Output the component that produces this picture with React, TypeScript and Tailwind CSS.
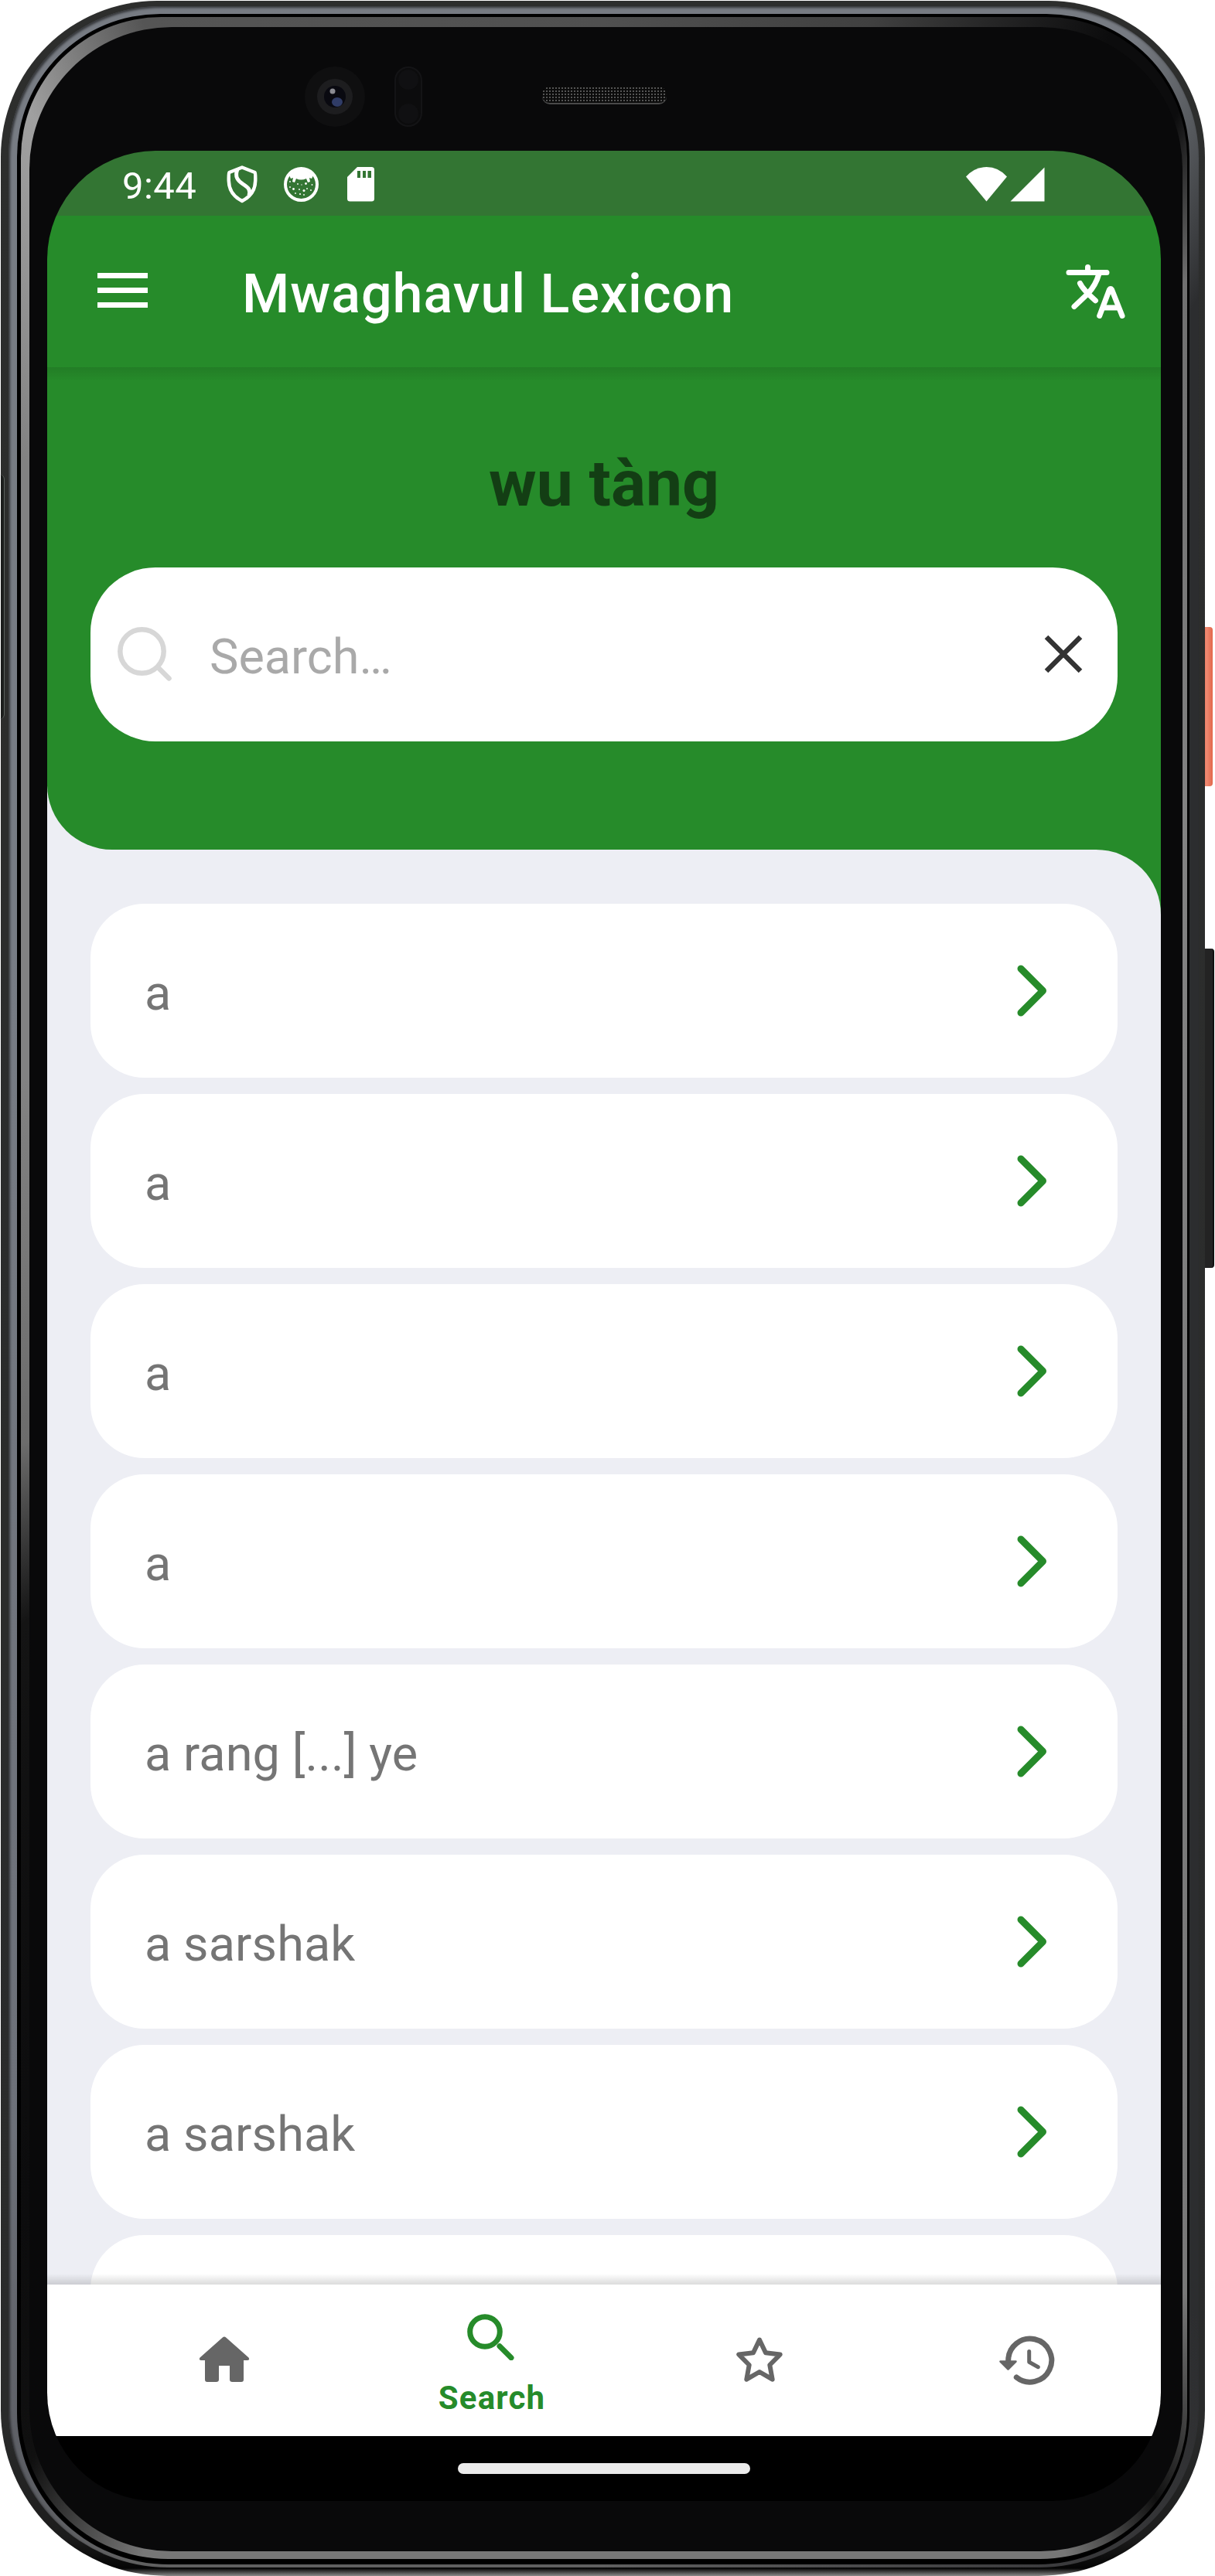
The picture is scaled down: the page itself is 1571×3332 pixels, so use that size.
const words = ['a', 'a', 'a', 'a', 'a rang [...] ye', 'a sarshak', 'a sarshak', ''];

function StatusBar() {
  return (
    <div className="flex h-[84px] shrink-0 items-center bg-[#337533] pl-[97px] pr-[150px] pt-[3px] text-white">
      <span className="w-[135px] pt-[4px] text-[49px] leading-[57px] tracking-[0.4px]">9:44</span>
      <svg className="h-[49px] w-[40px]" viewBox="0 0 40 49" fill="none" stroke="currentColor" strokeWidth="4.5" strokeLinejoin="round">
        <path d="M20 2.500 L36.500 9 Q37.500 10 37.200 20 C37 32 30 41 20 46 C10 41 3 32 2.800 20 Q2.500 10 3.500 9 Z" />
        <path d="M14 5 C10 15 15 20 21 24 C29 29 31 32 29 39" strokeWidth="5" />
      </svg>
      <svg className="ml-[34px] h-[45px] w-[45px]" viewBox="0 0 45 45" fill="none">
        <circle cx="22.500" cy="22.500" r="20.500" stroke="white" strokeWidth="4" />
        <path d="M7 11 Q22 -6 38 11 L36 15 L33 14 L34 19 L31 20 L29 15 Q22 18 16 15 L14 20 L11 19 L12 14 L9 15 Z" fill="white" />
        <g fill="white">
          <circle cx="28.500" cy="21.500" r="1.400" /><circle cx="12.500" cy="28.500" r="1.400" /><circle cx="26" cy="30.500" r="1.500" />
          <circle cx="18" cy="22" r="0.900" /><circle cx="8" cy="26" r="0.900" /><circle cx="36.500" cy="23" r="0.900" />
          <circle cx="20" cy="29" r="0.900" /><circle cx="30" cy="28" r="0.900" /><circle cx="35" cy="30" r="0.900" />
          <circle cx="15" cy="34" r="0.900" /><circle cx="21" cy="35" r="1.100" /><circle cx="26" cy="36" r="0.900" /><circle cx="23" cy="23" r="0.700" />
          <circle cx="8" cy="19" r="0.900" />
        </g>
      </svg>
      <svg className="ml-[37px] h-[45px] w-[35px]" viewBox="0 0 35 45">
        <path d="M13 0 H31.500 Q35 0 35 3.500 V41 Q35 44.500 31.500 44.500 H3.500 Q0 44.500 0 41 V13 Z" fill="white" />
        <path d="M13 5h4v9h-4z M20 5h4v9h-4z M26.500 5h4.500v9h-4.500z" fill="#337533" />
      </svg>
      <svg className="ml-auto h-[45px] w-[53px]" viewBox="0 0 53 45" fill="white">
        <path d="M0 12.500 Q11 0 26.500 0 Q42 0 53 12.500 L26.500 44.500 Z" />
      </svg>
      <svg className="ml-[4px] h-[45px] w-[45px]" viewBox="0 0 45 45" fill="white">
        <path d="M44.500 0.500 V44.500 H0.500 Z" />
      </svg>
    </div>
  );
}

function Toolbar() {
  return (
    <div className="flex h-[196px] shrink-0 items-center bg-[#268b2a] pl-[65px] pr-[46px] text-white">
      <div className="mb-[3px] flex w-[65px] flex-col gap-[12px]">
        <span className="h-[7px] bg-white" />
        <span className="h-[7px] bg-white" />
        <span className="h-[7px] bg-white" />
      </div>
      <h1 className="ml-[122px] pt-[6px] text-[70px] leading-[82px] font-medium tracking-[1px] whitespace-nowrap">Mwaghavul Lexicon</h1>
      <svg className="ml-auto h-[70px] w-[77px]" viewBox="0 0 77 70" fill="none" stroke="white" strokeWidth="7" strokeLinecap="round" strokeLinejoin="round">
        <path d="M4 10.500 H53 M28.500 3.500 V9 M43 12 C40 23 35.500 30.500 28.500 38 L11 54.500 M18.500 24.500 C21 30 25 35 38.500 46.800" />
        <path d="M43.700 66.500 L56.500 32.500 Q58 30.500 59.500 32.500 L73 66.500" />
        <path d="M49 56 H67" strokeLinecap="butt" />
      </svg>
    </div>
  );
}

function Header() {
  return (
    <div className="shrink-0 bg-[#edeef4]">
      <div className="relative flex h-[624px] flex-col items-center rounded-bl-[84px] bg-[#268b2a] px-[56px]">
        <div className="absolute inset-x-0 top-0 h-[18px] bg-gradient-to-b from-black/10 to-transparent" />
        <h2 className="mt-[102px] text-[84px] leading-[98px] font-bold text-[#133e14]">wu tàng</h2>
        <div className="mt-[59px] flex h-[225px] w-full items-center rounded-[84px] bg-white pl-[34px] pr-[45px]">
          <svg className="mb-[2px] h-[72px] w-[72px]" viewBox="0 0 72 72" fill="none" stroke="#d7d7d7" strokeWidth="6.500" strokeLinecap="round">
            <circle cx="32.500" cy="32.500" r="28.200" />
            <path d="M54 54 L67.500 67.500" />
          </svg>
          <span className="ml-[48px] pt-[6px] text-[63px] leading-[74px] text-[#a9a9a9]">Search…</span>
          <svg className="mb-[2px] ml-auto h-[50px] w-[50px]" viewBox="0 0 50 50" stroke="#333333" strokeWidth="6.500">
            <path d="M3 3 L47 47 M47 3 L3 47" />
          </svg>
        </div>
      </div>
    </div>
  );
}

function WordList() {
  return (
    <div className="min-h-0 flex-1 bg-[#268b2a]">
      <div className="relative flex h-full flex-col gap-[21px] overflow-hidden rounded-tr-[84px] bg-[#edeef4] px-[56px] pt-[70px]">
        {words.map((word, i) => (
          <div key={i} className="flex h-[225px] shrink-0 items-center rounded-[70px] bg-white pl-[70px] pr-[91px]">
            <span className="pt-[6px] text-[63px] leading-[74px] tracking-[0.1px] text-[#757575]">{word}</span>
            <svg className="ml-auto h-[67px] w-[39px]" viewBox="0 0 39 67" fill="none" stroke="#268b2a" strokeWidth="9" strokeLinecap="round" strokeLinejoin="round">
              <path d="M5 5 L33.500 33.500 L5 62" />
            </svg>
          </div>
        ))}
        <div className="absolute inset-x-0 bottom-0 h-[14px] bg-gradient-to-t from-black/14 to-transparent" />
      </div>
    </div>
  );
}

function BottomNav() {
  return (
    <div className="grid h-[196px] shrink-0 grid-cols-4 items-center bg-white pl-[56px]">
      <svg className="mx-auto mb-[2px] h-[60px] w-[66px]" viewBox="0 0 66 60" fill="#666666">
        <path d="M30.800 1.500 Q33 -0.500 35.200 1.500 L64.500 27.500 Q66.500 31 63 31 H58 V56 Q58 59 55 59 H43.500 Q40 59 40 56 V38 H26 V56 Q26 59 22.500 59 H11 Q8 59 8 56 V31 H3 Q-0.500 31 1.500 27.500 Z" />
      </svg>
      <div className="flex flex-col items-center pt-[13px] text-[#268b2a]">
        <svg className="h-[60px] w-[64px]" viewBox="0 0 64 60" fill="none" stroke="currentColor" strokeWidth="7">
          <circle cx="23" cy="23" r="19.300" />
          <path d="M42 41.700 L57 56.700" strokeLinecap="round" />
        </svg>
        <span className="mt-[24px] text-[42px] leading-[49px] font-bold tracking-[1.2px]">Search</span>
      </div>
      <svg className="mx-auto mb-[2px] h-[59px] w-[60px]" viewBox="0 0 60 59" fill="none" stroke="#666666" strokeWidth="6" strokeLinejoin="round">
        <path d="M30 3.500 L38 20.300 L56.700 22.500 L43.300 36 L46.700 54.700 L30 45 L13.300 54.700 L16.700 36 L3.300 22.500 L22 20.300 Z" />
      </svg>
      <svg className="mx-auto h-[64px] w-[74px]" viewBox="0 0 74 64" fill="none" stroke="#666666" strokeLinecap="round" strokeLinejoin="round">
        <path d="M12.700 34 V32 A28 28 0 1 1 23.300 54" strokeWidth="7" />
        <path d="M39.700 20.500 V34.300 L51.300 40.700" strokeWidth="5" />
        <path d="M2.500 33.500 H22.500 L12.500 43.500 Z" fill="#666666" strokeWidth="2.500" />
      </svg>
    </div>
  );
}

function Screen() {
  return (
    <div className="flex h-[3040px] w-[1440px] flex-col overflow-hidden rounded-[140px] bg-black">
      <StatusBar />
      <Toolbar />
      <Header />
      <WordList />
      <BottomNav />
      <div className="flex h-[84px] shrink-0 items-center justify-center">
        <div className="h-[14px] w-[378px] rounded-full bg-[#ebebeb]" />
      </div>
    </div>
  );
}

function Sensors() {
  return (
    <div className="flex h-[160px] items-center pl-[332px] pt-[20px]">
      <svg className="h-[80px] w-[80px]" viewBox="0 0 80 80">
        <circle cx="40" cy="40" r="39" fill="#0f0f10" />
        <circle cx="40" cy="40" r="23" fill="#1d1d1f" />
        <circle cx="40" cy="40" r="14" fill="#090910" />
        <ellipse cx="43" cy="47" rx="7" ry="6" fill="#303c66" />
        <circle cx="37" cy="33" r="3.500" fill="#8b8b92" />
      </svg>
      <div className="ml-[37px] flex h-[78px] w-[36px] flex-col items-center justify-between rounded-full border-2 border-[#141416] bg-[#0c0c0d] py-[2px]">
        <span className="h-[26px] w-[26px] rounded-full bg-[#101012]" />
        <span className="h-[26px] w-[26px] rounded-full bg-[#101012]" />
      </div>
      <div className="mb-[3px] ml-[155px] h-[23px] w-[161px] rounded-[10px] border-b-2 border-[#4a4a4a] bg-[#0b0b0b] bg-[radial-gradient(circle,#555_1px,transparent_1.4px)] bg-[length:4px_4px]" />
    </div>
  );
}

export default function App() {
  return (
    <div className="relative h-[3332px] w-[1571px] overflow-hidden bg-white pl-px pt-px font-[Roboto,sans-serif]">
      <div className="absolute left-[1552px] top-[811px] h-[206px] w-[16px] rounded-[4px] bg-gradient-to-r from-[#d9583f] via-[#f08a72] to-[#e2674b]" />
      <div className="absolute left-[1552px] top-[1227px] h-[413px] w-[18px] rounded-[4px] border-r-2 border-[#111111] bg-[#232323]" />
      <div className="relative h-[3331px] w-[1557px] rounded-t-[202px] rounded-b-[215px] bg-[linear-gradient(to_bottom,#2d2e2d_0%,#2a2b2b_94%,#1c1c1c_98.500%,#050505_99.700%,#8a8a8a_100%)] pl-[10px] pt-[7px]">
        <div className="h-[3313px] w-[1539px] rounded-t-[196px] rounded-b-[206px] bg-[conic-gradient(#777b82_0deg,#777b82_23deg,#55585c_27deg,#2c2d2f_31deg,#2c2d2f_150deg,#3a3a3c_160deg,#606060_180deg,#606060_200deg,#5c5e64_206deg,#6d7179_215deg,#777c84_300deg,#777b82_360deg)] pl-[11px] pt-[10px] shadow-[inset_2px_2px_3px_rgba(10,10,10,0.6)]">
          <div className="h-[3299px] w-[1516px] rounded-t-[185px] rounded-b-[196px] bg-black pl-[5px] pt-[4px]">
            <div className="h-[3288px] w-[1508px] rounded-t-[182px] rounded-b-[190px] bg-[conic-gradient(#505050_0deg,#404040_12deg,#0c0c0d_22deg,#0c0c0d_26deg,#707070_30deg,#828282_50deg,#787878_150deg,#101010_155.500deg,#777777_160deg,#777777_200deg,#101010_206deg,#0c0c0d_212deg,#141414_240deg,#6c6c6c_255deg,#828282_290deg,#828282_325deg,#a0a0a0_334deg,#555555_340deg,#505050_360deg)] pl-[11px] pt-[13px]">
              <div className="h-[3265px] w-[1491px] rounded-t-[184px] rounded-b-[184px] bg-[#09090a] pl-[23px]">
                <Sensors />
                <Screen />
              </div>
            </div>
          </div>
        </div>
      </div>
      <div className="absolute left-0 top-[614px] h-[316px] w-[6px] rounded-r-[6px] border-r border-[#5a605d] bg-gradient-to-r from-white from-20% to-[#1c1e1d] to-30%" />
    </div>
  );
}
